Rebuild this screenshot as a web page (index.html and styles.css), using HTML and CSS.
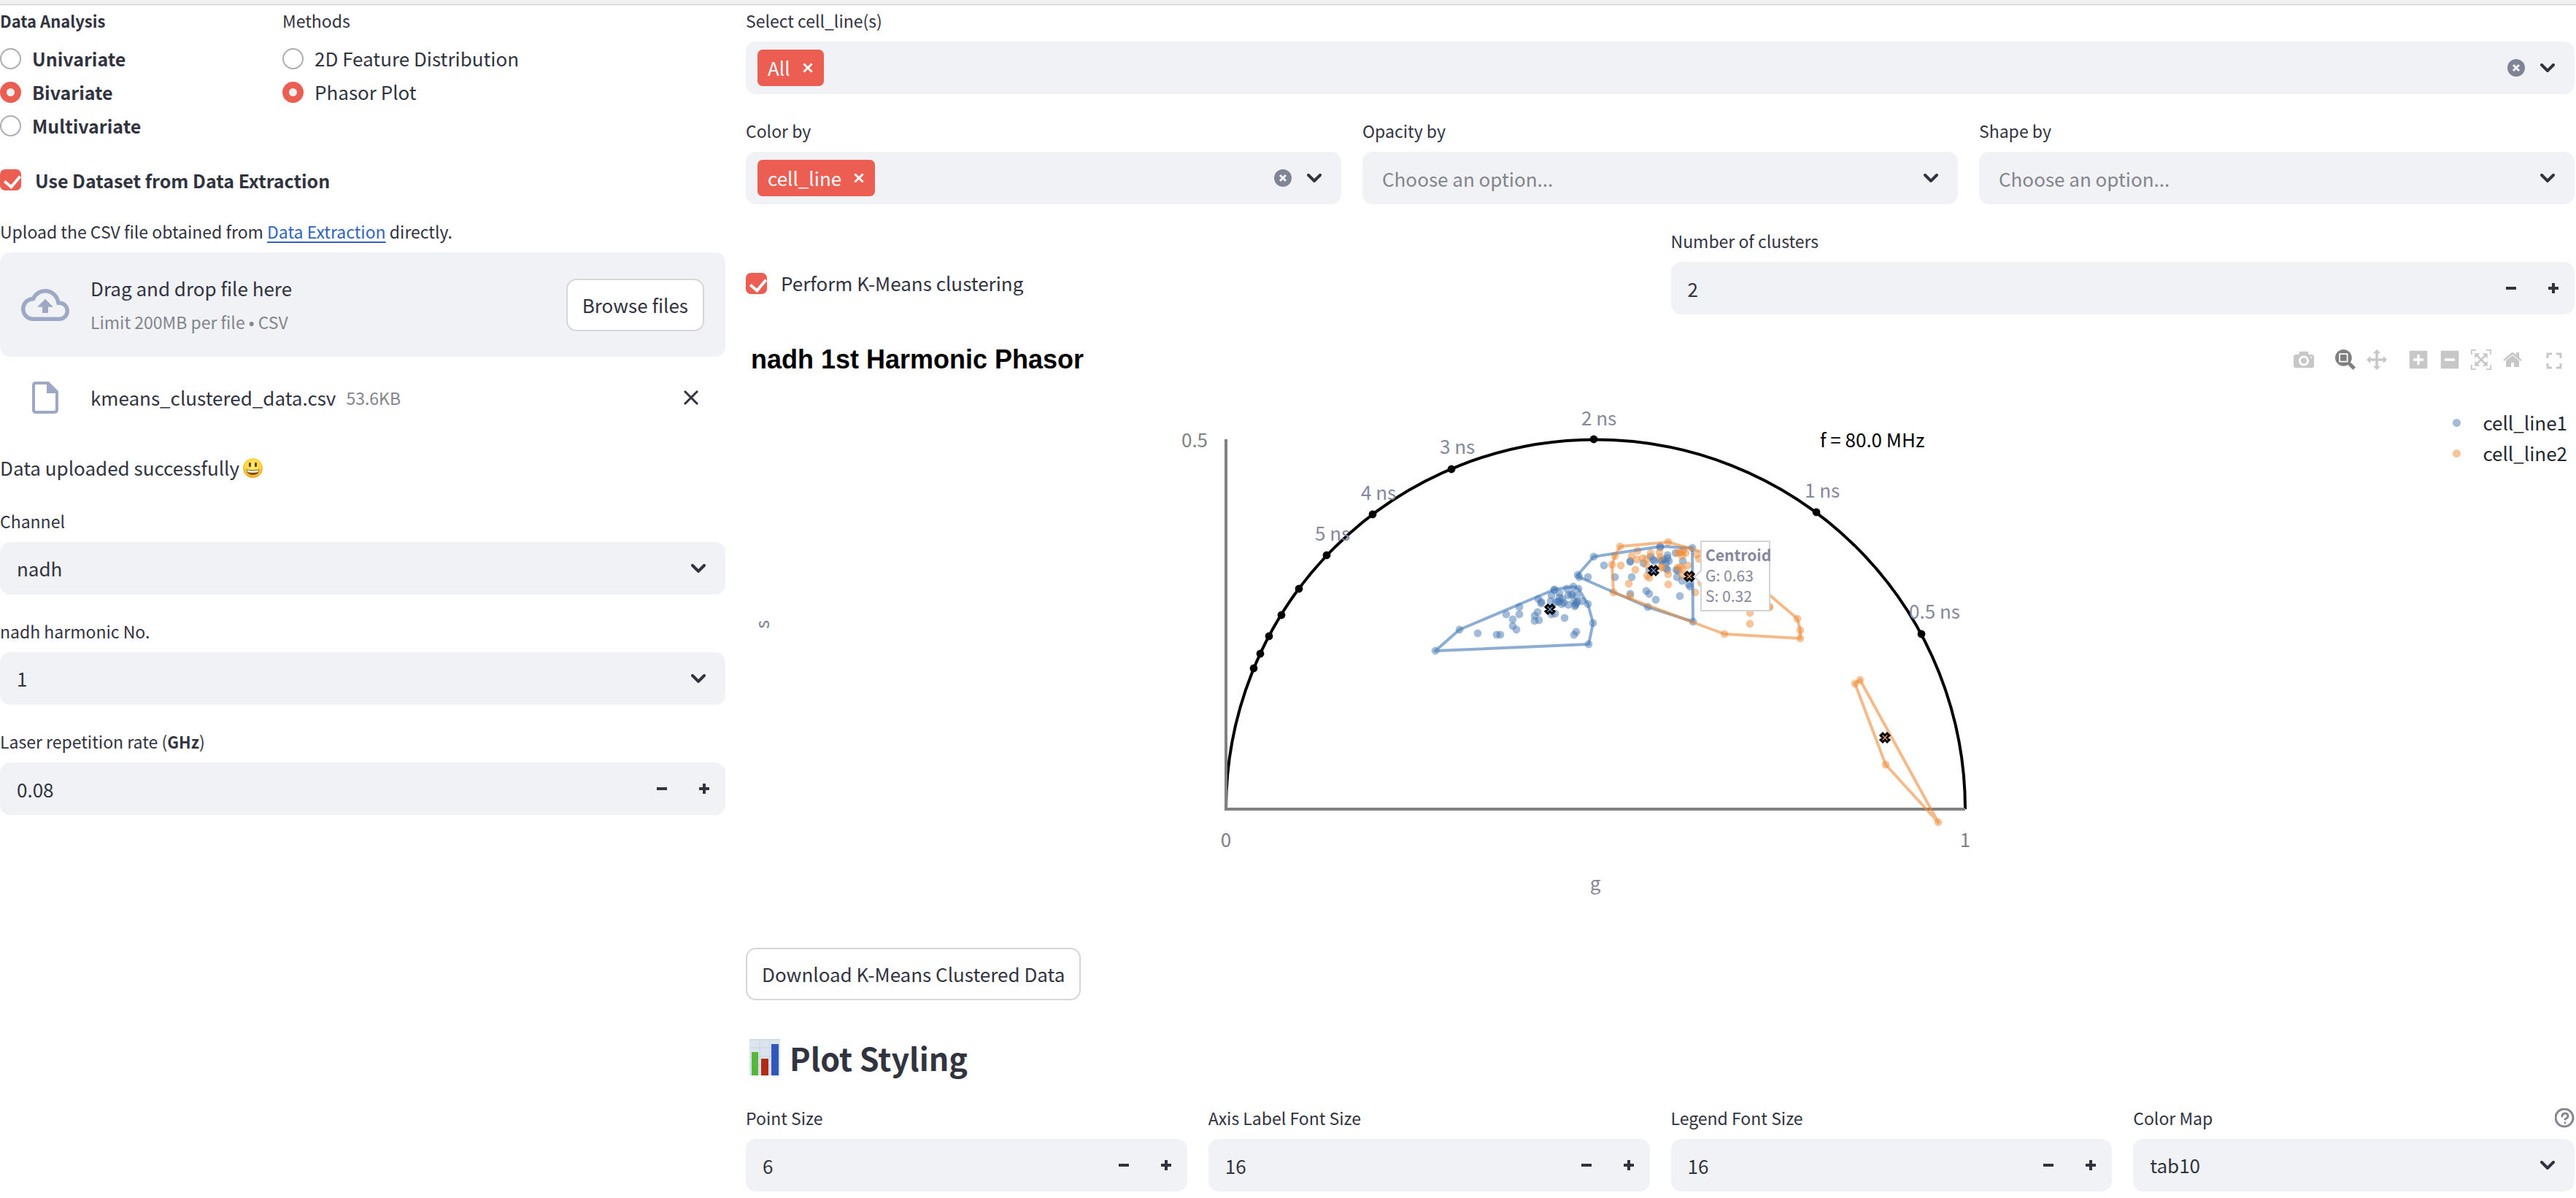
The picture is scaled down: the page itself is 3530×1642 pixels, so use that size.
FILE: index.html
```html
<!DOCTYPE html>
<html lang="en">
<head>
<meta charset="utf-8">
<title>Data Analysis</title>
<link rel="stylesheet" href="styles.css">
</head>
<body>
<svg class="defs" aria-hidden="true">
  <symbol id="chevron" viewBox="0 0 20 12"><path d="M2 2l8 8 8-8" fill="none" stroke="currentColor" stroke-width="4" stroke-linecap="round"/></symbol>
  <symbol id="cross" viewBox="0 0 20 20"><path d="M2 2l16 16M18 2L2 18" fill="none" stroke="currentColor" stroke-width="4"/></symbol>
  <symbol id="minus" viewBox="0 0 14 14"><path d="M0 7h14" stroke="currentColor" stroke-width="4"/></symbol>
  <symbol id="plus" viewBox="0 0 14 14"><path d="M0 7h14M7 0v14" stroke="currentColor" stroke-width="4"/></symbol>
  <symbol id="clear" viewBox="0 0 24 24"><circle cx="12" cy="12" r="12" fill="#808495"/><path d="M8 8l8 8M16 8l-8 8" stroke="#f0f2f6" stroke-width="3"/></symbol>
</svg>
<div class="topbar"></div>
<div class="page">
  <section class="side">
    <div class="choices">
      <fieldset>
        <legend class="label"><b>Data Analysis</b></legend>
        <label class="radio"><input type="radio" name="analysis"><b>Univariate</b></label>
        <label class="radio"><input type="radio" name="analysis" checked><b>Bivariate</b></label>
        <label class="radio"><input type="radio" name="analysis"><b>Multivariate</b></label>
      </fieldset>
      <fieldset>
        <legend class="label">Methods</legend>
        <label class="radio"><input type="radio" name="method">2D Feature Distribution</label>
        <label class="radio"><input type="radio" name="method" checked>Phasor Plot</label>
      </fieldset>
    </div>
    <label class="check"><input type="checkbox" checked><b>Use Dataset from Data Extraction</b></label>
    <div class="field">
      <p class="label">Upload the CSV file obtained from <a href="#extraction">Data Extraction</a> directly.</p>
      <div class="dropzone">
        <svg class="cloud" viewBox="0 0 24 24" fill="currentColor" aria-hidden="true"><path d="M19.350 10.040C18.670 6.590 15.640 4 12 4 9.110 4 6.600 5.640 5.350 8.040 2.340 8.360 0 10.910 0 14c0 3.310 2.690 6 6 6h13c2.760 0 5-2.240 5-5 0-2.640-2.050-4.780-4.650-4.960zM19 18H6c-2.210 0-4-1.790-4-4 0-2.050 1.530-3.760 3.560-3.970l1.070-.11.5-.95C8.080 7.140 9.940 6 12 6c2.620 0 4.880 1.860 5.390 4.430l.3 1.500 1.530.11c1.560.1 2.780 1.410 2.780 2.960 0 1.650-1.350 3-3 3zM8 13h2.550v3h2.900v-3H16l-4-4z"/></svg>
        <div class="drop-text"><span>Drag and drop file here</span><small>Limit 200MB per file • CSV</small></div>
        <button class="button browse" type="button">Browse files</button>
      </div>
      <div class="file">
        <svg class="doc" viewBox="0 0 36 44" aria-hidden="true"><path d="M5 2h17l12 12v24q0 4-4 4H5q-3 0-3-3V5q0-3 3-3z" fill="none" stroke="currentColor" stroke-width="4"/><path d="M20 2h3l11 11v3H20z" fill="currentColor"/></svg>
        <span>kmeans_clustered_data.csv</span><small>53.6KB</small>
        <button class="remove" type="button" aria-label="Remove file"><svg width="20" height="20" viewBox="0 0 20 20"><path d="M1 1l18 18M19 1L1 19" stroke="currentColor" stroke-width="3"/></svg></button>
      </div>
    </div>
    <p class="status">Data uploaded successfully
      <svg class="smile" viewBox="0 0 27 27" role="img" aria-label="smiling face"><defs><radialGradient id="face" cx=".5" cy=".4" r=".6"><stop offset="0" stop-color="#fff27a"/><stop offset=".7" stop-color="#fbd03c"/><stop offset="1" stop-color="#ee9b27"/></radialGradient></defs><circle cx="13.500" cy="13.500" r="13.500" fill="url(#face)"/><ellipse cx="9.500" cy="9" rx="1.600" ry="3.200" fill="#6b3d10"/><ellipse cx="17.500" cy="9" rx="1.600" ry="3.200" fill="#6b3d10"/><path d="M4.500 15q9 3 18 0-.5 8-9 8t-9-8z" fill="#7c4a10"/><path d="M5.500 16q8 3 16 0 0 3-2 3.200-6 1.200-12 0-2-.2-2-3.200z" fill="#fff"/></svg></p>
    <div class="field">
      <label class="label" for="channel">Channel</label>
      <div class="select"><select id="channel"><option>nadh</option></select><svg class="chevron"><use href="#chevron"/></svg></div>
    </div>
    <div class="field">
      <label class="label" for="harmonic">nadh harmonic No.</label>
      <div class="select"><select id="harmonic"><option>1</option></select><svg class="chevron"><use href="#chevron"/></svg></div>
    </div>
    <div class="field">
      <label class="label" for="rate">Laser repetition rate (<b>GHz</b>)</label>
      <div class="number"><input id="rate" type="number" step="0.01" value="0.08"><button type="button" aria-label="Decrease"><svg><use href="#minus"/></svg></button><button type="button" aria-label="Increase"><svg><use href="#plus"/></svg></button></div>
    </div>
  </section>

  <main class="main">
    <div class="field">
      <label class="label" for="lines">Select cell_line(s)</label>
      <div class="multi"><button class="tag" type="button">All<svg><use href="#cross"/></svg></button><input id="lines" type="text"><button class="clear" type="button" aria-label="Clear all"><svg><use href="#clear"/></svg></button><svg class="chevron"><use href="#chevron"/></svg></div>
    </div>
    <div class="row">
      <div class="field">
        <label class="label" for="color">Color by</label>
        <div class="multi"><button class="tag" type="button">cell_line<svg><use href="#cross"/></svg></button><input id="color" type="text"><button class="clear" type="button" aria-label="Clear all"><svg><use href="#clear"/></svg></button><svg class="chevron"><use href="#chevron"/></svg></div>
      </div>
      <div class="field">
        <label class="label" for="opacity">Opacity by</label>
        <div class="multi"><input id="opacity" type="text" placeholder="Choose an option..."><svg class="chevron"><use href="#chevron"/></svg></div>
      </div>
      <div class="field">
        <label class="label" for="shape">Shape by</label>
        <div class="multi"><input id="shape" type="text" placeholder="Choose an option..."><svg class="chevron"><use href="#chevron"/></svg></div>
      </div>
    </div>
    <div class="row cluster">
      <label class="check"><input type="checkbox" checked>Perform K-Means clustering</label>
      <div class="field">
        <label class="label" for="clusters">Number of clusters</label>
        <div class="number"><input id="clusters" type="number" value="2"><button type="button" aria-label="Decrease"><svg><use href="#minus"/></svg></button><button type="button" aria-label="Increase"><svg><use href="#plus"/></svg></button></div>
      </div>
    </div>

    <section class="chart">
      <header>
        <h2>nadh 1st Harmonic Phasor</h2>
        <div class="modebar">
          <div><button type="button" aria-label="Download plot"><svg viewBox="0 0 1000 1000"><path transform="matrix(1 0 0 -1 0 850)" d="m500 450c-83 0-150-67-150-150 0-83 67-150 150-150 83 0 150 67 150 150 0 83-67 150-150 150z m400 150h-120c-16 0-34 13-39 29l-31 93c-6 15-23 28-40 28h-340c-16 0-34-13-39-28l-31-94c-6-15-23-28-40-28h-120c-55 0-100-45-100-100v-450c0-55 45-100 100-100h800c55 0 100 45 100 100v450c0 55-45 100-100 100z m-400-550c-138 0-250 112-250 250 0 138 112 250 250 250 138 0 250-112 250-250 0-138-112-250-250-250z m365 380c-19 0-35 16-35 35 0 19 16 35 35 35 19 0 35-16 35-35 0-19-16-35-35-35z"/></svg></button></div>
          <div><button class="active" type="button" aria-label="Zoom"><svg viewBox="0 0 1000 1000"><path transform="matrix(1 0 0 -1 0 850)" d="m1000-25l-250 251c40 63 63 138 63 218 0 224-182 406-407 406-224 0-406-182-406-406s183-406 407-406c80 0 155 22 218 62l250-250 125 125z m-812 250l0 438 437 0 0-438-437 0z m62 375l313 0 0-312-313 0 0 312z"/></svg></button><button type="button" aria-label="Pan"><svg viewBox="0 0 1000 1000"><path transform="matrix(1 0 0 -1 0 850)" d="m1000 350l-187 188 0-125-250 0 0 250 125 0-188 187-187-187 125 0 0-250-250 0 0 125-188-188 186-187 0 125 252 0 0-250-125 0 187-188 188 188-125 0 0 250 250 0 0-126 187 188z"/></svg></button></div>
          <div><button type="button" aria-label="Zoom in"><svg viewBox="-62 0 1000 1000"><path transform="matrix(1 0 0 -1 0 850)" d="m1 787l0-875 875 0 0 875-875 0z m687-500l-187 0 0-187-125 0 0 187-188 0 0 125 188 0 0 187 125 0 0-187 187 0 0-125z"/></svg></button><button type="button" aria-label="Zoom out"><svg viewBox="-62 0 1000 1000"><path transform="matrix(1 0 0 -1 0 850)" d="m0 788l0-876 876 0 0 876-876 0z m688-500l-500 0 0 125 500 0 0-125z"/></svg></button><button type="button" aria-label="Autoscale"><svg viewBox="0 0 1000 1000"><path transform="matrix(1 0 0 -1 0 850)" d="m250 850l-187 0-63 0 0-62 0-188 63 0 0 188 187 0 0 62z m688 0l-188 0 0-62 188 0 0-188 62 0 0 188 0 62-62 0z m-875-938l0 188-63 0 0-188 0-62 63 0 187 0 0 62-187 0z m875 188l0-188-188 0 0-62 188 0 62 0 0 62 0 188-62 0z m-125 188l-1 0-93-94-156 156 156 156 92-93 2 0 0 250-250 0 0-2 93-92-156-156-156 156 94 92 0 2-250 0 0-250 0 0 93 93 157-156-157-156-93 94 0 0 0-250 250 0 0 0-94 93 156 157 156-157-93-93 0 0 250 0 0 250z"/></svg></button><button type="button" aria-label="Reset axes"><svg viewBox="-36 0 1000 1000"><path transform="matrix(1 0 0 -1 0 850)" d="m786 296v-267q0-15-11-26t-25-10h-214v214h-143v-214h-214q-15 0-25 10t-11 26v267q0 1 0 2t0 2l321 264 321-264q1-1 1-4z m124 39l-34-41q-5-5-12-6h-2q-7 0-12 3l-386 322-386-322q-7-4-13-4-7 2-12 7l-35 41q-4 5-3 13t6 12l401 334q18 15 42 15t43-15l136-114v109q0 8 5 13t13 5h107q8 0 13-5t5-13v-227l122-102q5-5 6-12t-4-13z"/></svg></button></div>
          <div><button type="button" aria-label="Fullscreen"><svg viewBox="0 0 28 28"><path d="M5 12V6h6M17 6h6v6M23 19v6h-6M11 25H5v-6" fill="none" stroke="currentColor" stroke-width="3"/></svg></button></div>
        </div>
      </header>
      <div class="chart-body">
        <span class="y-title">s</span>
        <svg class="plot" viewBox="1600 545 1172 725" role="img" aria-label="Phasor plot">
          <path class="arc" d="M1680 1109A506 506 0 0 1 2693 1109"/>
          <path class="axis" d="M1680 602V1109H2693"/>
          <g id="ticks"></g>
          <g class="ns">
            <text x="2167" y="583">2 ns</text><text x="1973" y="622">3 ns</text><text x="1865" y="685">4 ns</text><text x="1802" y="741">5 ns</text><text x="2473" y="682">1 ns</text><text x="2616" y="848">0.5 ns</text>
          </g>
          <text class="freq" x="2494" y="613">f = 80.0 MHz</text>
          <g class="tick"><text x="1637" y="613">0.5</text><text x="1680" y="1161">0</text><text x="2693" y="1161">1</text></g>
          <text class="x-title" x="2186" y="1220">g</text>
          <g id="data"></g>
          <g class="tip">
            <path d="M2331 742H2425V837H2331V799L2322 791L2331 782Z"/>
            <text class="tip-name" x="2337" y="769">Centroid</text><text x="2337" y="797">G: 0.63</text><text x="2337" y="825">S: 0.32</text>
          </g>
        </svg>
        <ul class="legend"><li class="blue">cell_line1</li><li class="orange">cell_line2</li></ul>
      </div>
    </section>

    <button class="button download" type="button">Download K-Means Clustered Data</button>
    <h1><svg viewBox="0 0 42 50" role="img" aria-label="bar chart"><rect width="42" height="50" fill="#dbe5ee"/><path d="M0 1h42M0 12h42M0 24h42M0 36h42M14 0v50M28 0v50" stroke="#c6d3df"/><rect x="3" y="18" width="9" height="32" fill="#55b83c"/><rect x="16" y="27" width="10" height="23" fill="#b02a16"/><rect x="30" y="7" width="10" height="43" fill="#2f57bd"/></svg>Plot Styling</h1>
    <div class="row">
      <div class="field">
        <label class="label" for="point">Point Size</label>
        <div class="number"><input id="point" type="number" value="6"><button type="button" aria-label="Decrease"><svg><use href="#minus"/></svg></button><button type="button" aria-label="Increase"><svg><use href="#plus"/></svg></button></div>
      </div>
      <div class="field">
        <label class="label" for="axis">Axis Label Font Size</label>
        <div class="number"><input id="axis" type="number" value="16"><button type="button" aria-label="Decrease"><svg><use href="#minus"/></svg></button><button type="button" aria-label="Increase"><svg><use href="#plus"/></svg></button></div>
      </div>
      <div class="field">
        <label class="label" for="legend">Legend Font Size</label>
        <div class="number"><input id="legend" type="number" value="16"><button type="button" aria-label="Decrease"><svg><use href="#minus"/></svg></button><button type="button" aria-label="Increase"><svg><use href="#plus"/></svg></button></div>
      </div>
      <div class="field">
        <div class="label with-help"><label for="map">Color Map</label><svg width="27" height="27" viewBox="0 0 27 27" fill="none" stroke="#85868f" stroke-width="3" stroke-linecap="round" role="img" aria-label="Help"><circle cx="13" cy="13" r="12"/><path d="M10 11q0-4 4-4t4 4q0 2-4 4" /><path d="M14 20v0"/></svg></div>
        <div class="select"><select id="map"><option>tab10</option></select><svg class="chevron"><use href="#chevron"/></svg></div>
      </div>
    </div>
  </main>
</div>
<script src="chart.js"></script>
</body>
</html>
```
FILE: styles.css
```css
* { box-sizing: border-box; }
body {
  margin: 0;
  background: #fff;
  color: #31333f;
  font: 26px/46px "Noto Sans CJK JP", "Noto Sans CJK SC", sans-serif;
}
input, select, button { font: inherit; color: inherit; border: 0; margin: 0; padding: 0; background: none; }
p, h1, h2, fieldset, ul { margin: 0; padding: 0; border: 0; }
small { font-size: 23px; color: #84858c; }
b { font-size: 25px; }
.label b { font-size: 22px; }
.defs { display: none; }
.topbar { height: 7px; background: #f0f0f0; border-bottom: 1px solid #ccc; }

.page { display: grid; grid-template-columns: 994fr 2506fr; gap: 28px; padding: 0 2px 8px 0; }
.side, .main { display: flex; flex-direction: column; gap: 29px; min-width: 0; }
.row { display: grid; grid-auto-flow: column; grid-auto-columns: minmax(0, 1fr); gap: 29px; }
.cluster { align-items: center; }
.cluster .check { padding-top: 36px; }

.label { display: block; font-size: 23px; line-height: 43px; margin-bottom: 7px; padding: 0; }
.label a { color: #2f63c8; text-underline-offset: 4px; }
.with-help { display: flex; align-items: center; justify-content: space-between; }

.choices { display: grid; grid-template-columns: 387px 1fr; padding-bottom: 2px; }
.radio { display: flex; align-items: center; gap: 15px; height: 46px; }
.radio input { appearance: none; width: 29px; height: 29px; border-radius: 50%; border: 2px solid #adaeb4; }
.radio input:checked { border: 9px solid #ec5e52; background: #f0f2f6; }
.check { display: flex; align-items: center; gap: 19px; height: 41px; }
.check input { appearance: none; width: 29px; height: 29px; border-radius: 7px; background: #ec5e52; position: relative; }
.check input::after { content: ""; position: absolute; left: 10px; top: 4px; width: 10px; height: 17px; border: solid #fff; border-width: 0 4px 4px 0; transform: rotate(40deg); }

.button { height: 72px; padding: 0 20px; border: 2px solid #d6d6d9; border-radius: 14px; background: #fff; }
.dropzone { display: flex; align-items: center; height: 143px; padding: 0 29px; background: #f0f2f6; border-radius: 14px; }
.cloud { width: 66px; height: 66px; margin-right: 29px; color: #9da9c4; }
.drop-text { flex: 1; display: flex; flex-direction: column; }
.file { display: flex; align-items: center; height: 100px; padding: 12px 37px 0 44px; }
.doc { width: 36px; height: 44px; margin-right: 44px; color: #9da9c4; }
.file small { margin-left: 14px; }
.remove { margin-left: auto; display: flex; }
.status { display: flex; align-items: center; gap: 5px; }
.smile { width: 27px; height: 27px; }

.select, .number, .multi { display: flex; align-items: center; height: 72px; background: #f0f2f6; border-radius: 14px; }
.select { display: grid; }
.select > * { grid-area: 1 / 1; }
.select select { appearance: none; width: 100%; height: 72px; padding: 0 23px; }
.chevron { width: 20px; height: 12px; margin-right: 27px; justify-self: end; pointer-events: none; }
.number input, .multi input { flex: 1; min-width: 0; height: 72px; padding: 0 23px; }
.number input { appearance: textfield; }
.number input::-webkit-inner-spin-button { display: none; }
.number button { width: 58px; height: 72px; display: grid; place-items: center; }
.number button svg { width: 14px; height: 14px; }
.multi input { padding: 0 27px; }
.multi input::placeholder { color: #84858c; opacity: 1; }
.tag { display: flex; align-items: center; gap: 17px; height: 50px; margin-left: 16px; padding: 0 15px 0 14px; background: #ec5e52; color: #fff; border-radius: 7px; }
.tag svg { width: 14px; height: 14px; }
.clear { display: flex; margin-right: 21px; }
.clear svg { width: 24px; height: 24px; }

.chart header { display: flex; justify-content: space-between; align-items: center; height: 85px; padding: 0 7px 20px 7px; }
.chart h2 { font: bold 36px/44px "Liberation Sans", Arial, sans-serif; color: #000; }
.modebar, .modebar div { display: flex; }
.modebar { gap: 14px; }
.modebar button { width: 43px; display: grid; place-items: center; color: #c7c7c7; }
.modebar .active { color: #7f7f7f; }
.modebar svg { width: 28px; height: 28px; fill: currentColor; }
.chart-body { display: grid; grid-template-columns: 42px minmax(0, 1fr) 220px; height: 725px; }
.y-title { writing-mode: vertical-rl; transform: rotate(180deg); text-align: center; padding-top: 104px; line-height: 42px; color: #808495; }
.plot { width: 100%; height: 725px; overflow: visible; }
.plot text { font-size: 26px; fill: #85889b; }
.plot .arc { fill: none; stroke: #000; stroke-width: 4; }
.plot .axis { fill: none; stroke: #808080; stroke-width: 4; }
.plot .freq { fill: #000; }
.plot .tick text { fill: #808080; text-anchor: middle; }
.plot .x-title { text-anchor: middle; }
.hull { fill: none; stroke-width: 4; stroke-linejoin: round; opacity: 0.6; }
.hull.blue { stroke: #4078b8; }
.hull.orange { stroke: #f08c38; }
.dot { opacity: 0.5; }
.dot.blue { fill: #4678b4; }
.dot.orange { fill: #f08c38; }
.mark { stroke: #000; stroke-width: 3; }
.mark.blue { fill: #6f9fd6; }
.mark.orange { fill: #f5a766; }
.tip path { fill: #fff; stroke: #d3d3d3; stroke-width: 2; }
.plot .tip text { font-size: 21px; }
.tip .tip-name { font-weight: bold; }
.legend { list-style: none; padding: 13px 10px 0 0; color: #262730; line-height: 42px; }
.legend li { display: flex; align-items: center; justify-content: flex-end; gap: 30px; }
.legend li::before { content: ""; width: 11px; height: 11px; border-radius: 50%; background: #a3bcda; }
.legend .orange::before { background: #f7c598; }

.download { align-self: flex-start; }
h1 { display: flex; align-items: center; gap: 13px; height: 82px; padding: 16px 0 0 5px; font-size: 43px; line-height: 60px; }
h1 svg { width: 42px; height: 50px; }
```
FILE: chart.js
```js
const NS = 'http://www.w3.org/2000/svg';
const data = document.getElementById('data');
const ticks = document.getElementById('ticks');

function add(parent, name, attrs) {
  const el = document.createElementNS(NS, name);
  for (const key in attrs) el.setAttribute(key, attrs[key]);
  parent.appendChild(el);
}

// Lifetime markers along the universal semicircle.
[[2184, 602], [1989, 643], [1881, 705], [1818, 761], [1780, 807], [1756, 843], [1739, 872], [1727, 896], [1718, 916], [2489, 702], [2633, 869]]
  .forEach(([cx, cy]) => add(ticks, 'circle', { cx, cy, r: 5.4 }));

const hulls = [
  ['blue', '1967,892 2000,863 2130,808 2156,804 2163,807 2176,828 2183,854 2177,883'],
  ['blue', '2162,788 2184,763 2275,749 2319,751 2320,852 2258,832 2164,791'],
  ['orange', '2220,749 2286,743 2330,756 2395,790 2463,848 2467,864 2467,875 2363,869 2320,853 2211,812 2209,774 2213,762'],
  ['orange', '2542,937 2549,932 2656,1127 2584,1048'],
];
const points = {
  blue: `1967,892 2000,863 2025,868 2051,870 2056,870 2064,842 2073,849 2073,858 2078,863 2082,832 2082,842 2107,839
    2103,844 2103,851 2109,850 2108,821 2112,825 2112,827 2130,808 2130,809 2126,816 2137,813 2137,819 2125,824 2132,825
    2135,825 2137,824 2141,821 2140,828 2143,826 2149,829 2147,807 2149,816 2155,814 2153,815 2156,804 2163,807 2161,817
    2157,824 2160,827 2159,829 2158,831 2161,825 2168,824 2176,828 2183,854 2177,883 2160,866 2157,870 2144,847 2131,841
    2126,842 2184,763 2162,788 2164,791 2176,791 2198,775 2213,791 2234,770 2234,769 2236,791 2234,814 2256,810 2260,814
    2269,822 2258,832 2302,817 2320,852 2319,751 2275,749 2275,750 2262,763 2265,767 2267,769 2252,772 2260,782 2275,768
    2278,769 2280,767 2283,771 2285,761 2287,769 2285,765 2283,779 2285,781 2296,758 2306,769 2297,781 2299,782 2298,791
    2305,796 2316,804 2314,801`,
  orange: `2220,749 2213,762 2209,774 2211,812 2221,775 2232,800 2241,781 2234,817 2236,762 2244,755 2243,767 2251,765
    2256,766 2256,774 2262,758 2257,789 2260,792 2274,757 2275,764 2277,778 2277,777 2286,787 2286,801 2286,743 2299,758
    2302,757 2305,757 2307,754 2310,758 2305,762 2299,778 2303,777 2306,780 2313,775 2305,788 2323,812 2325,760 2328,766
    2331,799 2398,840 2398,855 2363,869 2467,875 2467,864 2463,848 2425,832 2424,832 2542,937 2549,932 2584,1048 2656,1127`,
};
const centroids = [['blue', 2124, 835], ['blue', 2266, 782], ['orange', 2315, 790], ['orange', 2583, 1011]];

for (const colour in points) {
  for (const pair of points[colour].trim().split(/\s+/)) {
    const [cx, cy] = pair.split(',');
    add(data, 'circle', { cx, cy, r: 5.4, class: 'dot ' + colour });
  }
}
for (const [colour, list] of hulls) add(data, 'polygon', { points: list, class: 'hull ' + colour });
for (const [colour, x, y] of centroids) {
  add(data, 'path', { class: 'mark ' + colour, d: `M${x} ${y - 3}l3-3 3 3-3 3 3 3-3 3-3-3-3 3-3-3 3-3-3-3 3-3z` });
}
```
